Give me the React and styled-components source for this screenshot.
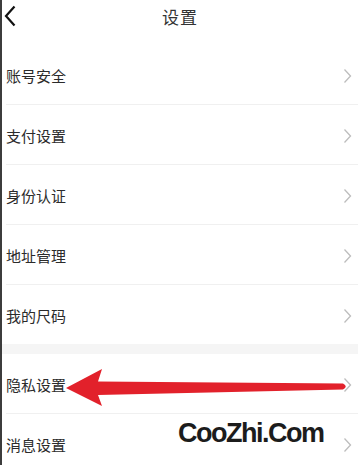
import styled, { createGlobalStyle } from "styled-components";

const GlobalStyle = createGlobalStyle`
  html, body {
    margin: 0;
    padding: 0;
    background: #ffffff;
  }
  body {
    font-family: "Noto Sans CJK SC", "Noto Sans", sans-serif;
  }
`;

const items = [
  ["账号安全", "支付设置", "身份认证", "地址管理", "我的尺码"],
  ["隐私设置", "消息设置"],
];

const App = () => {
  return (
    <Page>
      <GlobalStyle />
      <Header>
        <BackButton>
          <svg width="12" height="22" viewBox="0 0 12 22">
            <path d="M10.5 1.5 L2 11 L10.5 20.5" fill="none" stroke="#111" strokeWidth="2.2" />
          </svg>
        </BackButton>
        <Title>设置</Title>
        <span />
      </Header>
      {items.map((group, gi) => (
        <Group key={gi} first={gi === 0}>
          {group.map((label, i) => (
            <Row key={label} last={i === group.length - 1}>
              <Label>{label}</Label>
              <svg width="9" height="16" viewBox="0 0 9 16">
                <path d="M1.5 1.5 L7.5 8 L1.5 14.5" fill="none" stroke="#bdbdbd" strokeWidth="1.3" />
              </svg>
            </Row>
          ))}
        </Group>
      ))}
      <Arrow width="358" height="465" viewBox="0 0 358 465">
        <path
          d="M66 388 L102 369 L98 381.5 L343 383.5 Q348.5 386.5 343 389.5 L98 395 L102 406 Z"
          fill="#e2212b"
        />
      </Arrow>
      <Watermark>CooZhi.Com</Watermark>
    </Page>
  );
};

export default App;

const Page = styled.div`
  position: relative;
  width: 358px;
  height: 465px;
  overflow: hidden;
  box-sizing: border-box;
  border-left: 2px solid #3c3c3c;
  background: #fff;
`;

const Header = styled.div`
  height: 45px;
  display: grid;
  grid-template-columns: 1fr auto 1fr;
  align-items: start;
  padding-top: 5px;
  box-sizing: border-box;
`;

const BackButton = styled.div`
  display: flex;
  padding-left: 2px;
`;

const Title = styled.div`
  font-size: 17px;
  line-height: 24px;
  color: #333;
  letter-spacing: 1px;
`;

const Group = styled.div`
  border-top: ${(p) => (p.first ? "none" : "10px solid #f5f5f5")};
`;

const Row = styled.div`
  height: ${(p) => (p.last ? "59px" : "60px")};
  margin-left: 4px;
  padding-right: 6px;
  display: flex;
  align-items: center;
  justify-content: space-between;
  border-bottom: ${(p) => (p.last ? "none" : "1px solid #f0f0f0")};
  padding-top: 2px;
  box-sizing: border-box;
  svg {
    flex-shrink: 0;
  }
`;

const Label = styled.span`
  font-size: 15px;
  color: #2b2b2b;
`;

const Arrow = styled.svg`
  position: absolute;
  left: -2px;
  top: 0;
  pointer-events: none;
`;

const Watermark = styled.div`
  position: absolute;
  left: 176px;
  top: 418px;
  font-family: "Liberation Sans", Arial, sans-serif;
  font-weight: 700;
  font-size: 27px;
  letter-spacing: -1.5px;
  color: #1c1c1c;
`;
